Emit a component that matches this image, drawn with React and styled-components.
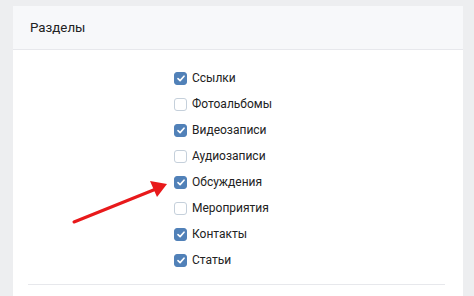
import React from 'react';
import styled, {createGlobalStyle} from 'styled-components';

const Global = createGlobalStyle`
    html, body {
        margin:0;
        padding:0;
        background:#edeef0;
        font-family: Roboto, "Open Sans", Arial, sans-serif;
    }
`;

const Page = styled.div`
    position:relative;
    width:474px;
    height:296px;
    overflow:hidden;
    padding:6px 11px 0 13px;
    box-sizing:border-box;
`;

const Card = styled.div`
    background:#fff;
    width:450px;
    height:300px;
    display:flex;
    flex-direction:column;
`;

const Header = styled.div`
    height:43px;
    background:#f7f8fa;
    border-bottom:1px solid #e7e8ec;
    display:flex;
    align-items:center;
    padding-left:17px;
    font-size:13.3px;
    color:#222;
`;

const List = styled.div`
    display:flex;
    flex-direction:column;
    padding:15px 0 11px 161px;
`;

const Row = styled.label`
    height:26px;
    display:flex;
    align-items:center;
    gap:5px;
    font-size:12px;
    color:#222;
`;

const Box = styled.span`
    width:13px;
    height:13px;
    border-radius:3px;
    box-sizing:border-box;
    display:flex;
    align-items:center;
    justify-content:center;
    background:${p => p.checked ? '#5181b8' : '#fff'};
    border:1px solid ${p => p.checked ? '#5181b8' : '#c5d0db'};
`;

const Divider = styled.div`
    height:1px;
    background:#e7e8ec;
    margin:0 18px 0 15px;
`;

const Arrow = styled.svg`
    position:absolute;
    left:0;
    top:0;
    pointer-events:none;
`;

const items = [
    ['Ссылки', true],
    ['Фотоальбомы', false],
    ['Видеозаписи', true],
    ['Аудиозаписи', false],
    ['Обсуждения', true],
    ['Мероприятия', false],
    ['Контакты', true],
    ['Статьи', true],
];

const Check = () => (
    <svg width="8" height="7" viewBox="0 0 8 7">
        <path d="M1 3.6 L3.1 5.6 L7 1.2" fill="none" stroke="#fff" strokeWidth="1.6" strokeLinecap="round" strokeLinejoin="round"/>
    </svg>
);

export default function App(){
    return(
        <Page>
            <Global/>
            <Card>
                <Header>Разделы</Header>
                <List>
                    {items.map(([title, checked]) =>
                        <Row key={title}>
                            <Box checked={checked}>{checked && <Check/>}</Box>
                            {title}
                        </Row>)}
                </List>
                <Divider/>
            </Card>
            <Arrow width="474" height="296">
                <line x1="74" y1="222" x2="156" y2="189" stroke="#e8191b" strokeWidth="3" strokeLinecap="round"/>
                <polygon points="167,184 150,181 157,197" fill="#e8191b"/>
            </Arrow>
        </Page>
    )
}
